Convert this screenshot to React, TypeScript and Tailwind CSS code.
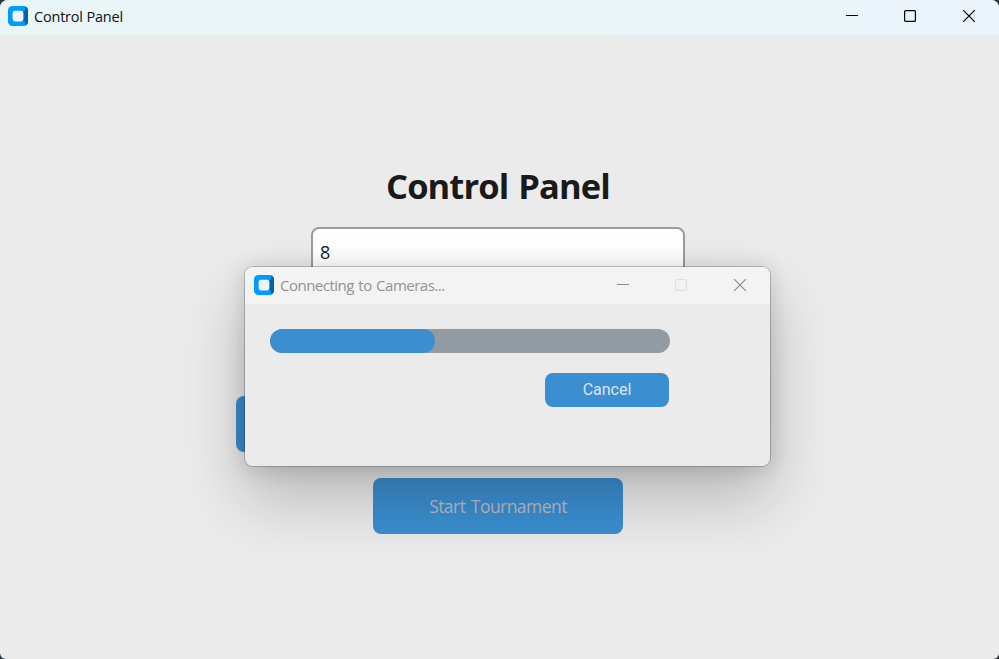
import React from "react";

function AppIcon() {
  return (
    <svg width="20" height="20" viewBox="0 0 20 20" className="shrink-0">
      <rect width="20" height="20" rx="4.5" fill="#009bff" />
      <path d="M15 4 L16.6 .7 Q20 1.5 20 4.5 V15.5 Q20 18.5 16.6 19.3 L15 16 Z" fill="#0560b4" />
      <circle cx="14.4" cy="2.8" r="2.7" fill="#009bff" />
      <circle cx="14.4" cy="17.2" r="2.7" fill="#009bff" />
      <rect x="4.6" y="4.8" width="10.8" height="10.6" rx="2.4" fill="#eff5f8" />
    </svg>
  );
}

function WindowButtons({ line, box, cross }: { line: string; box: string; cross: string }) {
  return (
    <div className="flex items-center gap-[46px]">
      <svg width="12" height="14" viewBox="0 0 12 14" className={line}>
        <path d="M0 6.5h12" stroke="currentColor" />
      </svg>
      <svg width="12" height="14" viewBox="0 0 12 14" className={box}>
        <rect x=".6" y="1.6" width="10.8" height="10.8" rx="1" fill="none" stroke="currentColor" strokeWidth="1.2" />
      </svg>
      <svg width="14" height="14" viewBox="0 0 14 14" className={cross}>
        <path d="M1.2 1.2l11.6 11.6M12.8 1.2L1.2 12.8" stroke="currentColor" strokeWidth="1.2" fill="none" />
      </svg>
    </div>
  );
}

function ProgressBar() {
  return (
    <div className="h-6 w-[400px] overflow-hidden rounded-full bg-[#939ba2]">
      <div className="h-full w-[165px] rounded-full bg-[#3b8ed0]" />
    </div>
  );
}

function ConnectDialog() {
  return (
    <div className="absolute left-[244px] top-[266px] h-[201px] w-[527px] overflow-hidden rounded-[9px] border border-black/20 bg-[#ebebeb] bg-clip-padding shadow-[0_32px_64px_rgba(0,0,0,0.22),0_2px_21px_rgba(0,0,0,0.14)]">
      <div className="flex h-[37px] items-center justify-between bg-[#f3f3f3] pb-px pl-[9px] pr-[23px]">
        <div className="flex items-center gap-[6px]">
          <AppIcon />
          <span className="pt-px text-[15px] tracking-[-0.5px] text-[#929292] [word-spacing:1px]">Connecting to Cameras...</span>
        </div>
        <WindowButtons line="text-[#8c8c8c]" box="text-[#dfdfdf]" cross="text-[#8c8c8c]" />
      </div>
      <div className="flex w-[425px] flex-col items-end gap-5 pt-[25px]">
        <ProgressBar />
        <button className="mr-px h-[34px] w-[124px] rounded-[8px] bg-[#3b8ed0] pb-px font-['Roboto',sans-serif] text-[16px] text-[#dce4ee]">
          Cancel
        </button>
      </div>
    </div>
  );
}

export default function App() {
  return (
    <div className="h-[659px] w-[999px] overflow-hidden bg-[#303640] font-['Open_Sans','Noto_Sans',sans-serif]">
      <div className="relative flex h-full flex-col overflow-hidden rounded-t-[8px] rounded-b-[6px] bg-[#ebebeb]">
        <header className="flex h-[35px] shrink-0 items-center justify-between bg-linear-to-r from-[#eaf5f8] via-[#ebf5f7] to-[#ebf4fb] pb-[3px] pl-2 pr-[23px]">
          <div className="flex items-center gap-[6px]">
            <AppIcon />
            <span className="pt-[2px] text-[14.5px] tracking-[-0.2px] text-[#101010]">Control Panel</span>
          </div>
          <WindowButtons line="text-black" box="text-black" cross="text-black" />
        </header>
        <main className="flex grow flex-col items-center pr-[3px] pt-[127px]">
          <h1 className="h-[50px] text-[34.5px] font-bold leading-[48px] tracking-[-0.9px] text-[#1a1a1a] [word-spacing:2px]">
            Control Panel
          </h1>
          <div className="mt-[15px] flex h-14 w-[374px] items-center rounded-[8px] border-2 border-[#979da2] bg-white px-[7px] pb-[5px] text-[18px] text-[#1a1a1a]">
            8
          </div>
          <div className="mt-[113px] flex gap-6">
            <div className="h-14 w-[250px] rounded-[8px] bg-[#3b8ed0]" />
            <div className="h-14 w-[250px] rounded-[8px] bg-[#3b8ed0]" />
          </div>
          <button className="mt-[26px] h-14 w-[250px] rounded-[8px] bg-[#3b8ed0] text-[17.5px] tracking-[-0.55px] text-[#b9bdc2] [word-spacing:1.5px]">
            Start Tournament
          </button>
        </main>
        <ConnectDialog />
      </div>
    </div>
  );
}
